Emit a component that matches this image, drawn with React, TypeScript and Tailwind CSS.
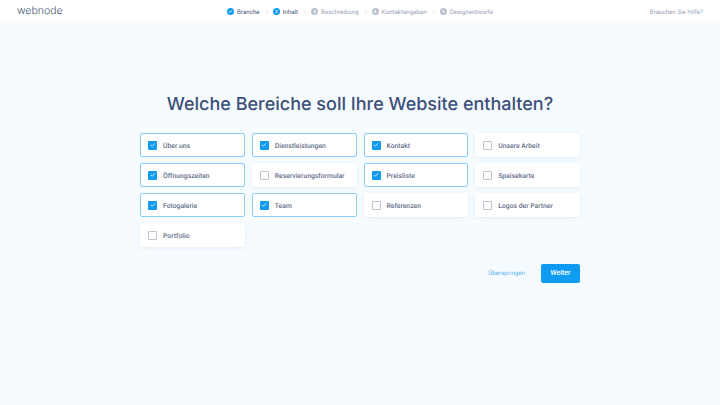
import { Check, ChevronRight } from "lucide-react";

const options = [
  { name: "Über uns", on: true },
  { name: "Dienstleistungen", on: true },
  { name: "Kontakt", on: true },
  { name: "Unsere Arbeit", on: false },
  { name: "Öffnungszeiten", on: true },
  { name: "Reservierungsformular", on: false },
  { name: "Preisliste", on: true },
  { name: "Speisekarte", on: false },
  { name: "Fotogalerie", on: true },
  { name: "Team", on: true },
  { name: "Referenzen", on: false },
  { name: "Logos der Partner", on: false },
  { name: "Portfolio", on: false },
];

const steps = [
  { name: "Branche", mark: "check" },
  { name: "Inhalt", mark: "2" },
  { name: "Beschreibung", mark: "3" },
  { name: "Kontaktangaben", mark: "4" },
  { name: "Designentwürfe", mark: "5" },
];

function Step({ name, mark, index }: { name: string; mark: string; index: number }) {
  const active = index < 2;
  return (
    <div className="flex items-center">
      {index > 0 && <ChevronRight className="mr-[3px] ml-[4px] h-[6px] w-[6px] text-[#c3cad6]" strokeWidth={2} />}
      <span
        className={`flex h-[7px] w-[7px] items-center justify-center rounded-full text-[4px] leading-none font-semibold text-white ${
          active ? "bg-[#0f9bf2]" : "bg-[#b9c1cf]"
        }`}
      >
        {mark === "check" ? <Check className="h-[5px] w-[5px]" strokeWidth={4} /> : mark}
      </span>
      <span className={`ml-[3px] font-['Roboto',sans-serif] text-[6.2px] leading-[10px] ${active ? "text-[#47597a]" : "text-[#9aa5b8]"}`}>
        {name}
      </span>
    </div>
  );
}

function Option({ name, on }: { name: string; on: boolean }) {
  return (
    <div
      className={`flex h-[24px] items-center rounded-[2px] bg-white ${
        on ? "border border-[#8dcdf8] pl-[7px]" : "pl-[8px] shadow-[0_1px_4px_rgba(120,150,190,0.14)]"
      }`}
    >
      <span
        className={`flex h-[9px] w-[9px] items-center justify-center rounded-[1px] ${
          on ? "bg-[#0f9bf2]" : "border border-[#bcc3cf] bg-white"
        }`}
      >
        {on && <Check className="h-[6px] w-[6px] text-white" strokeWidth={3} />}
      </span>
      <span className="ml-[6px] pt-[1px] font-['Roboto',sans-serif] text-[6.8px] leading-[10px] font-medium text-[#5f6e88]">{name}</span>
    </div>
  );
}

export default function App() {
  return (
    <div className="h-[405px] w-[720px] overflow-hidden bg-[#f6fbff] font-['Inter',sans-serif] [text-rendering:geometricPrecision]">
      <header className="relative flex h-[23px] items-center justify-center bg-white">
        <span className="absolute left-[17px] top-[3px] text-[10.5px] leading-[16px] font-light text-[#47597a]">webnode</span>
        <nav className="flex items-center">
          {steps.map((s, i) => (
            <Step key={s.name} name={s.name} mark={s.mark} index={i} />
          ))}
        </nav>
        <span className="absolute right-[17px] top-[7px] font-['Roboto',sans-serif] text-[6.2px] leading-[10px] text-[#9aa5b8]">
          Brauchen Sie Hilfe?
        </span>
      </header>

      <main className="mx-auto w-[440px] pt-[70px]">
        <h1 className="whitespace-nowrap text-center text-[18px] leading-[24px] font-medium text-[#3b5078]">
          Welche Bereiche soll Ihre Website enthalten?
        </h1>
        <div className="mt-[16px] grid grid-cols-4 gap-x-[7px] gap-y-[6px]">
          {options.map((o) => (
            <Option key={o.name} name={o.name} on={o.on} />
          ))}
        </div>
        <div className="mt-[17px] flex items-center justify-end">
          <span className="pt-[1px] font-['Roboto',sans-serif] text-[6.2px] text-[#5cb3ef]">Überspringen</span>
          <button className="ml-[16px] h-[19px] w-[39px] rounded-[2px] bg-[#0f9bf2] font-['Roboto',sans-serif] text-[7px] font-medium text-white">
            Weiter
          </button>
        </div>
      </main>
    </div>
  );
}
